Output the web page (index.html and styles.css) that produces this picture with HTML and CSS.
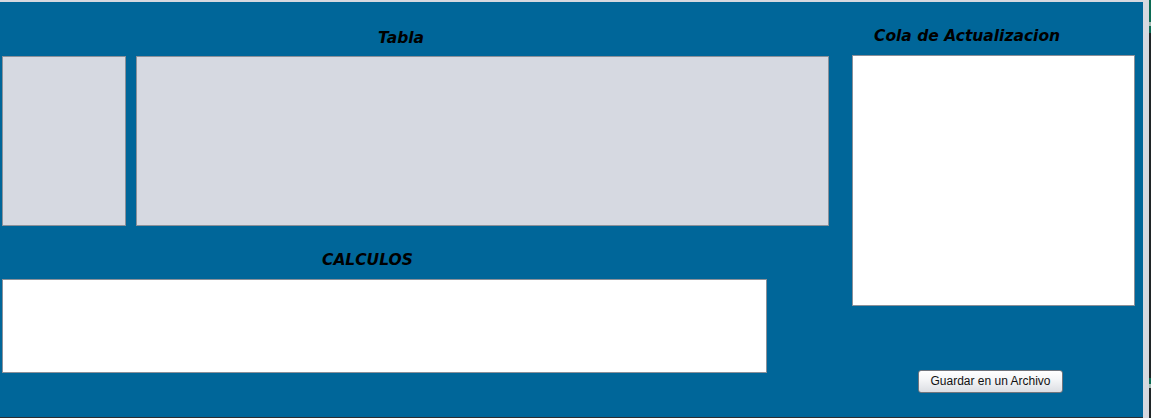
FILE: index.html
```html
<!DOCTYPE html>
<html lang="es">
<head>
<meta charset="utf-8">
<title>Tabla</title>
<link rel="stylesheet" href="styles.css">
</head>
<body>
<div class="window">
  <div class="frame">
    <div class="top-strip"></div>
    <div class="panel">
      <div class="left-col">
        <div class="title title-tabla">Tabla</div>
        <div class="table-row">
          <div class="box gray row-header"></div>
          <div class="box gray table-main"></div>
        </div>
        <div class="title title-calc">CALCULOS</div>
        <div class="box white calc-box"></div>
      </div>
      <div class="right-col">
        <div class="title title-cola">Cola de Actualizacion</div>
        <div class="box white queue-box"></div>
        <div class="button-row">
          <button class="btn" type="button">Guardar en un Archivo</button>
        </div>
      </div>
    </div>
    <div class="bottom-line"></div>
  </div>
  <div class="edge-light"></div>
  <div class="edge-dark">
    <div class="green green-top"><span class="mark"></span></div>
    <div class="dark-fill"></div>
    <div class="green green-bottom"><span class="mark"></span></div>
    <div class="dark-end"></div>
  </div>
</div>
</body>
</html>
```

FILE: styles.css
```css
html, body {
  margin: 0;
  padding: 0;
  background: #d6d9e0;
}

.window {
  display: flex;
  width: 1151px;
  height: 418px;
  overflow: hidden;
}

.frame {
  display: flex;
  flex-direction: column;
  width: 1143px;
}

.top-strip {
  height: 2px;
  background: #d6d9e0;
}

.panel {
  flex: 1;
  display: flex;
  background: #006699;
  padding-left: 2px;
}

.bottom-line {
  height: 1px;
  background: #2b2f33;
}

.edge-light {
  width: 6px;
  background: #d6d9e0;
}

.edge-dark {
  width: 2px;
  display: flex;
  flex-direction: column;
  background: #1f2426;
}

.green {
  background: #0b6a52;
  position: relative;
}

.green-top {
  height: 33px;
}

.green-bottom {
  height: 10px;
}

.mark {
  position: absolute;
  left: 0;
  width: 2px;
  height: 4px;
  background: #9fb8b0;
}

.green-top .mark {
  top: 22px;
}

.green-bottom .mark {
  top: 6px;
}

.dark-fill {
  height: 345px;
  background: #1f2426;
}

.dark-end {
  flex: 1;
  background: #1f2426;
}

.title {
  font-family: "DejaVu Sans", Verdana, sans-serif;
  font-weight: bold;
  font-style: italic;
  font-size: 15.5px;
  line-height: 20px;
  color: #000;
  box-sizing: border-box;
}

.left-col {
  width: 827px;
  display: flex;
  flex-direction: column;
}

.title-tabla {
  height: 54px;
  padding-top: 26px;
  padding-left: 376px;
}

.table-row {
  display: flex;
  gap: 10px;
  height: 170px;
}

.box {
  box-sizing: border-box;
  border: 1px solid #8a9099;
}

.gray {
  background: #d6d9e1;
}

.white {
  background: #ffffff;
}

.row-header {
  width: 124px;
}

.table-main {
  width: 693px;
}

.title-calc {
  height: 53px;
  padding-top: 24px;
  padding-left: 320px;
}

.calc-box {
  width: 765px;
  height: 94px;
}

.right-col {
  margin-left: 23px;
  width: 283px;
  display: flex;
  flex-direction: column;
}

.title-cola {
  height: 53px;
  padding-top: 24px;
  padding-left: 22px;
}

.queue-box {
  height: 251px;
}

.button-row {
  padding-top: 64px;
  padding-left: 66px;
}

.btn {
  box-sizing: border-box;
  width: 145px;
  height: 23px;
  margin: 0;
  padding: 0;
  border: 1px solid #70757d;
  border-radius: 3px;
  background: linear-gradient(#ffffff, #f3f4f6 45%, #dcdee3);
  font-family: "Liberation Sans", Arial, sans-serif;
  font-size: 12px;
  color: #111;
  line-height: 21px;
  text-align: center;
}
```
